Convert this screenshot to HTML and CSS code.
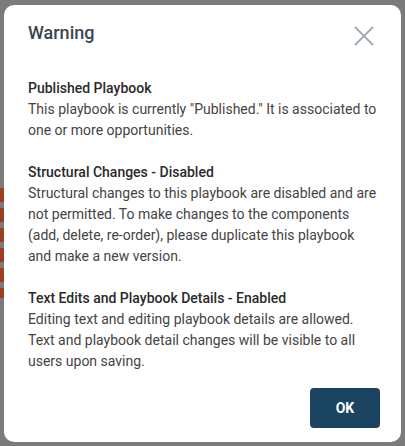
FILE: index.html
```html
<!DOCTYPE html>
<html>
<head>
<meta charset="utf-8">
<link rel="stylesheet" href="styles.css">
</head>
<body>
<div class="backdrop">
  <div class="stripe"></div>
  <div class="modal">
    <div class="modal-header">
      <h2 class="title">Warning</h2>
      <button class="close" aria-label="Close">
        <svg width="20" height="20" viewBox="0 0 20 20"><path d="M1 1 L19 19 M19 1 L1 19" stroke="#a3adb8" stroke-width="2" fill="none"/></svg>
      </button>
    </div>
    <div class="modal-body">
      <section class="block">
        <h3 class="block-title">Published Playbook</h3>
        <p class="block-text">This playbook is currently "Published." It is associated to one or more opportunities.</p>
      </section>
      <section class="block">
        <h3 class="block-title">Structural Changes - Disabled</h3>
        <p class="block-text">Structural changes to this playbook are disabled and are not permitted. To make changes to the components (add, delete, re-order), please duplicate this playbook and make a new version.</p>
      </section>
      <section class="block">
        <h3 class="block-title">Text Edits and Playbook Details - Enabled</h3>
        <p class="block-text">Editing text and editing playbook details are allowed. Text and playbook detail changes will be visible to all users upon saving.</p>
      </section>
    </div>
    <div class="modal-footer">
      <button class="ok">OK</button>
    </div>
  </div>
</div>
</body>
</html>
```

FILE: styles.css
```css
html, body {
  margin: 0;
  padding: 0;
}
body {
  width: 405px;
  height: 446px;
  overflow: hidden;
  background: #7b7b7b;
  font-family: Roboto, "Liberation Sans", sans-serif;
}
.backdrop {
  position: relative;
  height: 446px;
  padding: 5px 4px 0 4px;
  box-sizing: border-box;
}
.stripe {
  position: absolute;
  left: 0;
  top: 188px;
  width: 4px;
  height: 110px;
  background: repeating-linear-gradient(180deg, #9a3f1f 0 14px, #7b7b7b 14px 20px);
}
.modal {
  position: relative;
  background: #fff;
  border-radius: 10px;
  height: 437px;
  box-sizing: border-box;
  display: flex;
  flex-direction: column;
  padding: 0 21px 0 24px;
}
.modal-header {
  display: flex;
  align-items: center;
  justify-content: space-between;
  height: 58px;
}
.title {
  margin: 0;
  font-size: 18px;
  font-weight: 500;
  color: #3b4651;
  position: relative;
  top: -2px;
}
.close {
  border: 0;
  background: transparent;
  padding: 0;
  width: 20px;
  height: 20px;
  margin-right: 6px;
  margin-top: 3px;
  display: flex;
}
.modal-body {
  padding-top: 15px;
}
.block {
  margin-bottom: 21px;
}
.block:last-child {
  margin-bottom: 16px;
}
.block-title {
  margin: 0;
  font-size: 14px;
  line-height: 21px;
  font-weight: 500;
  color: #2a2a2a;
}
.block-text {
  margin: 0;
  font-size: 14px;
  line-height: 21px;
  color: #444;
}
.modal-footer {
  display: flex;
  justify-content: flex-end;
}
.ok {
  width: 70px;
  height: 40px;
  border: 0;
  border-radius: 4px;
  background: #1b4462;
  color: #fff;
  font-family: Roboto, "Liberation Sans", sans-serif;
  font-size: 14px;
  font-weight: 700;
}
```
